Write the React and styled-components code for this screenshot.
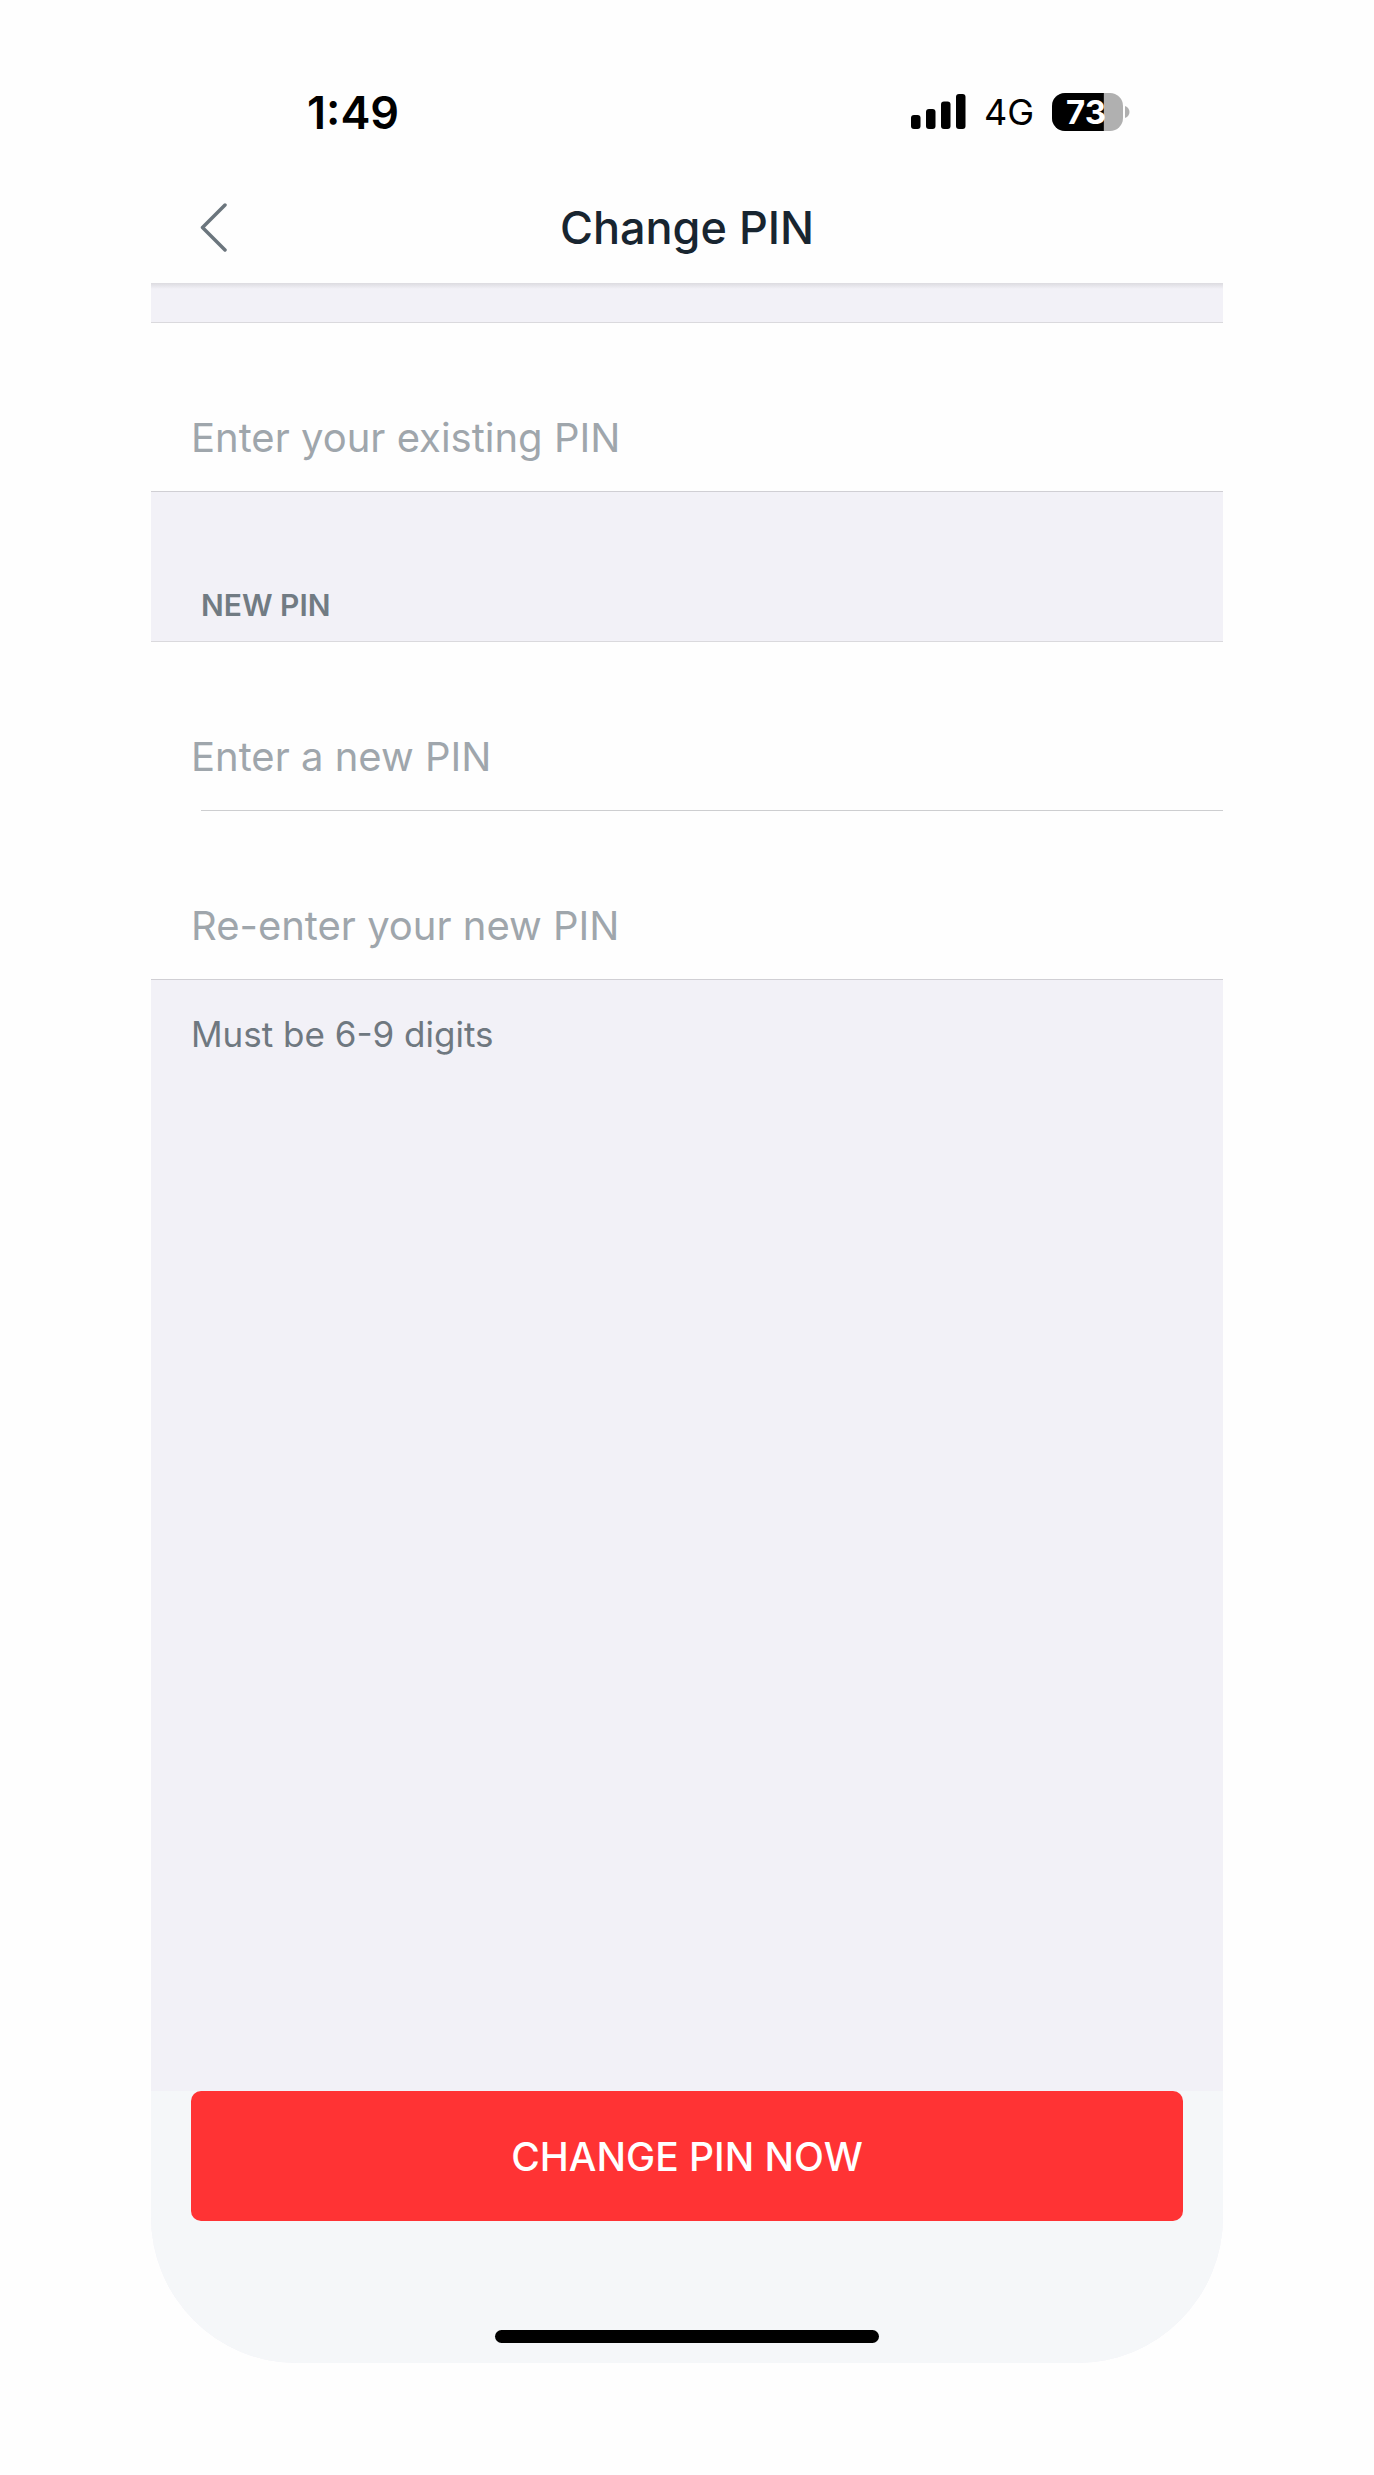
import React, { useState } from 'react'
import styled, { createGlobalStyle } from 'styled-components';

const GlobalStyle = createGlobalStyle`
* {
box-sizing:border-box;
}
body {
margin:0;
background-color:#fefefe;
font-family:Inter, "Liberation Sans", sans-serif;
}
`

const Page = styled.div`
display:flex;
flex-direction:column;
min-height:100vh;
padding:0 151px 112px;
`

const Screen = styled.main`
flex:1;
display:flex;
flex-direction:column;
overflow:hidden;
border-radius:0 0 146px 146px;
background-color:#f2f1f7;
`

const Header = styled.header`
background-color:#fefefe;
`

const StatusBar = styled.div`
display:flex;
align-items:center;
justify-content:space-between;
height:171px;
padding:53px 93px 0 156px;
color:#000;
`

const Time = styled.span`
font-size:45px;
font-weight:600;
`

const StatusIcons = styled.div`
display:flex;
align-items:center;
gap:18px;
`

const Network = styled.span`
font-size:36px;
`

const NavBar = styled.nav`
display:grid;
grid-template-columns:1fr auto 1fr;
align-items:center;
height:112px;
padding:0 40px;
`

const BackButton = styled.button`
display:flex;
justify-self:start;
padding:8px;
border:none;
background:none;
color:#6b757d;
cursor:pointer;
`

const Title = styled.h1`
margin:0;
font-size:45px;
font-weight:500;
color:#182530;
`

const Form = styled.form`
flex:1;
display:flex;
flex-direction:column;
`

const Gap = styled.div`
height:39px;
background:linear-gradient(#dcdbe0, #f2f1f7 6px);
`

const Group = styled.div`
border-top:1px solid #dad9dd;
border-bottom:1px solid #d0cfd4;
background-color:#fefefe;
`

const Row = styled.div`
display:flex;
padding:88px 40px 28px;
`

const Divider = styled.hr`
height:1px;
margin:0 0 0 50px;
border:none;
background-color:#cdced0;
`

const Input = styled.input`
flex:1;
min-width:0;
height:52px;
padding:0;
border:none;
outline:none;
background:transparent;
font-family:inherit;
font-size:40px;
color:#182530;

&::placeholder {
color:#9fa6ac;
opacity:1;
}
`

const SectionTitle = styled.h2`
margin:0;
padding:95px 50px 18px;
font-size:30px;
font-weight:600;
line-height:36px;
color:#717b83;
`

const Hint = styled.p`
flex:1;
margin:0;
padding:32px 40px;
font-size:35px;
line-height:44px;
color:#6f7880;
`

const Footer = styled.footer`
display:flex;
flex-direction:column;
align-items:center;
padding:0 40px 20px;
background-color:#f5f7f9;
`

const SubmitButton = styled.button`
width:100%;
height:130px;
border:none;
border-radius:10px;
background-color:#ff3334;
color:white;
font-family:inherit;
font-size:39px;
font-weight:500;
cursor:pointer;
`

const HomeIndicator = styled.div`
width:384px;
max-width:60%;
height:13px;
margin-top:109px;
border-radius:7px;
background-color:#000;
`

const SignalIcon = () => (
    <svg width="55" height="38" viewBox="0 0 55 38" aria-hidden="true">
        <rect x="0" y="22" width="9.5" height="14" rx="3" />
        <rect x="15" y="16" width="9.5" height="20" rx="3" />
        <rect x="30" y="8.5" width="9.5" height="27.5" rx="3" />
        <rect x="45" y="1" width="9.5" height="35" rx="3" />
    </svg>
)

const BatteryIcon = ({ level }) => (
    <svg width="78" height="38" viewBox="0 0 78 38" role="img" aria-label={`Battery ${level}%`}>
        <clipPath id="battery">
            <rect width="71" height="38" rx="13" />
        </clipPath>
        <g clipPath="url(#battery)">
            <rect width="71" height="38" fill="#b0b0b0" />
            <rect width={(71 * level) / 100} height="38" fill="#000" />
        </g>
        <path d="M73 13c3 1 4.500 3.500 4.500 6s-1.500 5-4.500 6z" fill="#b0b0b0" />
        <text x="34" y="31" textAnchor="middle" fontSize="33" fontWeight="700" fill="#fff">{level}</text>
    </svg>
)

const BackIcon = () => (
    <svg width="30" height="50" viewBox="0 0 30 50" fill="none" stroke="currentColor" strokeWidth="3.500" strokeLinecap="round" strokeLinejoin="round" aria-hidden="true">
        <path d="M26 3L3.500 25.500L26 48" />
    </svg>
)

const PinField = ({ label, value, onChange }) => (
    <Row>
        <Input type="password" inputMode="numeric" maxLength={9} aria-label={label} placeholder={label} value={value} onChange={onChange} />
    </Row>
)

const App = () => {

    const [pins, setPins] = useState({ existing: "", next: "", confirm: "" });

    const update = (name) => (e) => {
        setPins({ ...pins, [name]: e.target.value });
    };

    return (
        <Page>
            <GlobalStyle />
            <Screen>
                <Header>
                    <StatusBar>
                        <Time>1:49</Time>
                        <StatusIcons>
                            <SignalIcon />
                            <Network>4G</Network>
                            <BatteryIcon level={73} />
                        </StatusIcons>
                    </StatusBar>
                    <NavBar>
                        <BackButton type="button" aria-label="Back">
                            <BackIcon />
                        </BackButton>
                        <Title>Change PIN</Title>
                    </NavBar>
                </Header>
                <Form onSubmit={(e) => e.preventDefault()}>
                    <Gap />
                    <Group>
                        <PinField label="Enter your existing PIN" value={pins.existing} onChange={update("existing")} />
                    </Group>
                    <SectionTitle>NEW PIN</SectionTitle>
                    <Group>
                        <PinField label="Enter a new PIN" value={pins.next} onChange={update("next")} />
                        <Divider />
                        <PinField label="Re-enter your new PIN" value={pins.confirm} onChange={update("confirm")} />
                    </Group>
                    <Hint>Must be 6-9 digits</Hint>
                    <Footer>
                        <SubmitButton type="submit">CHANGE PIN NOW</SubmitButton>
                        <HomeIndicator />
                    </Footer>
                </Form>
            </Screen>
        </Page>
    )
}

export default App
